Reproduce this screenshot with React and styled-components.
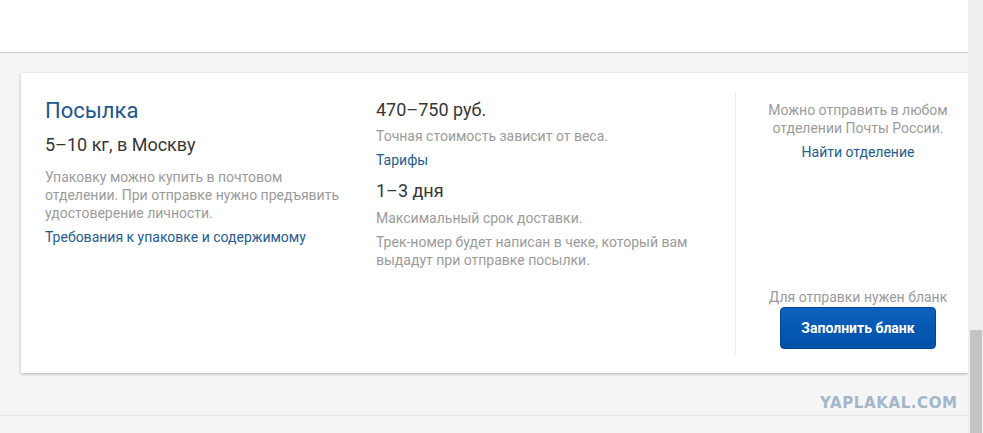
import React from "react";
import styled, { createGlobalStyle } from "styled-components";

const GlobalStyle = createGlobalStyle`
  html, body {
    margin: 0;
    padding: 0;
    background: #f5f5f5;
    font-family: Roboto, "Liberation Sans", Arial, sans-serif;
    overflow: hidden;
  }
`;

const Page = styled.div`
  display: flex;
  width: 983px;
  height: 433px;
  position: relative;
`;

const Main = styled.div`
  width: 968px;
  display: flex;
  flex-direction: column;
`;

const TopBar = styled.div`
  height: 52px;
  background: #ffffff;
  border-bottom: 1px solid #cbcbcb;
`;

const Content = styled.div`
  padding: 20px 0 0 21px;
  height: 363px;
  box-sizing: border-box;
  border-bottom: 1px solid #e6e6e6;
`;

const Card = styled.div`
  display: flex;
  height: 300px;
  background: #ffffff;
  box-shadow: 0 1px 3px rgba(0, 0, 0, 0.28);
  overflow: hidden;
`;

const Column = styled.div`
  display: flex;
  flex-direction: column;
  width: ${(p) => p.$width}px;
  padding-top: 24px;
  box-sizing: border-box;
  flex-shrink: 0;
`;

const Side = styled.div`
  flex-shrink: 0;
  width: 244px;
  margin: 19px 0 18px;
  padding: 9px 0 6px;
  border-left: 1px solid #ececec;
  display: flex;
  flex-direction: column;
  justify-content: space-between;
  align-items: center;
  text-align: center;
`;

const Title = styled.div`
  font-size: 22px;
  line-height: 28px;
  color: #20588e;
`;

const Heading = styled.div`
  font-size: 18px;
  line-height: 24px;
  color: #363636;
  margin-top: ${(p) => p.$mt || 0}px;
`;

const Note = styled.div`
  font-size: 14px;
  line-height: 18px;
  color: #9b9b9b;
  margin-top: ${(p) => p.$mt || 0}px;
`;

const Link = styled.a`
  display: block;
  font-size: 14px;
  line-height: 18px;
  color: #245c92;
  text-decoration: none;
  margin-top: ${(p) => p.$mt || 0}px;
`;

const Group = styled.div`
  display: flex;
  flex-direction: column;
  align-items: center;
`;

const Button = styled.button`
  margin-top: 1px;
  width: 156px;
  height: 42px;
  border: 1px solid #004690;
  border-radius: 4px;
  background: linear-gradient(#0c62bd, #0050a8);
  color: #ffffff;
  font-family: Roboto, "Liberation Sans", Arial, sans-serif;
  font-weight: 700;
  font-size: 14px;
  cursor: pointer;
`;

const Scrollbar = styled.div`
  width: 15px;
  background: #efefef;
  display: flex;
  flex-direction: column;
  padding: 330px 1px 0 2px;
  box-sizing: border-box;
`;

const Thumb = styled.div`
  flex: 1;
  background: #c4c4c4;
`;

const Watermark = styled.div`
  position: absolute;
  left: 820px;
  top: 394px;
  font-family: "DejaVu Sans", Verdana, sans-serif;
  font-weight: 700;
  font-size: 15px;
  letter-spacing: 0.6px;
  color: #a3b6ca;
`;

export default function App() {
  return (
    <>
      <GlobalStyle />
      <Page>
        <Main>
          <TopBar />
          <Content>
            <Card>
              <Column $width={355} style={{ paddingLeft: 24 }}>
                <Title>Посылка</Title>
                <Heading $mt={8}>5–10 кг, в Москву</Heading>
                <Note $mt={11}>
                  Упаковку можно купить в почтовом
                  <br />
                  отделении. При отправке нужно предъявить
                  <br />
                  удостоверение личности.
                </Note>
                <Link $mt={6} href="#">
                  Требования к упаковке и содержимому
                </Link>
              </Column>
              <Column $width={359}>
                <Heading style={{ lineHeight: "26px" }}>470–750 руб.</Heading>
                <Note $mt={4}>Точная стоимость зависит от веса.</Note>
                <Link $mt={6} href="#">
                  Тарифы
                </Link>
                <Heading $mt={10}>1–3 дня</Heading>
                <Note $mt={6}>Максимальный срок доставки.</Note>
                <Note $mt={6}>
                  Трек-номер будет написан в чеке, который вам
                  <br />
                  выдадут при отправке посылки.
                </Note>
              </Column>
              <Side>
                <Group>
                  <Note>
                    Можно отправить в любом
                    <br />
                    отделении Почты России.
                  </Note>
                  <Link $mt={6} href="#">
                    Найти отделение
                  </Link>
                </Group>
                <Group>
                  <Note>Для отправки нужен бланк</Note>
                  <Button>Заполнить бланк</Button>
                </Group>
              </Side>
            </Card>
          </Content>
        </Main>
        <Scrollbar>
          <Thumb />
        </Scrollbar>
        <Watermark>YAPLAKAL.COM</Watermark>
      </Page>
    </>
  );
}
